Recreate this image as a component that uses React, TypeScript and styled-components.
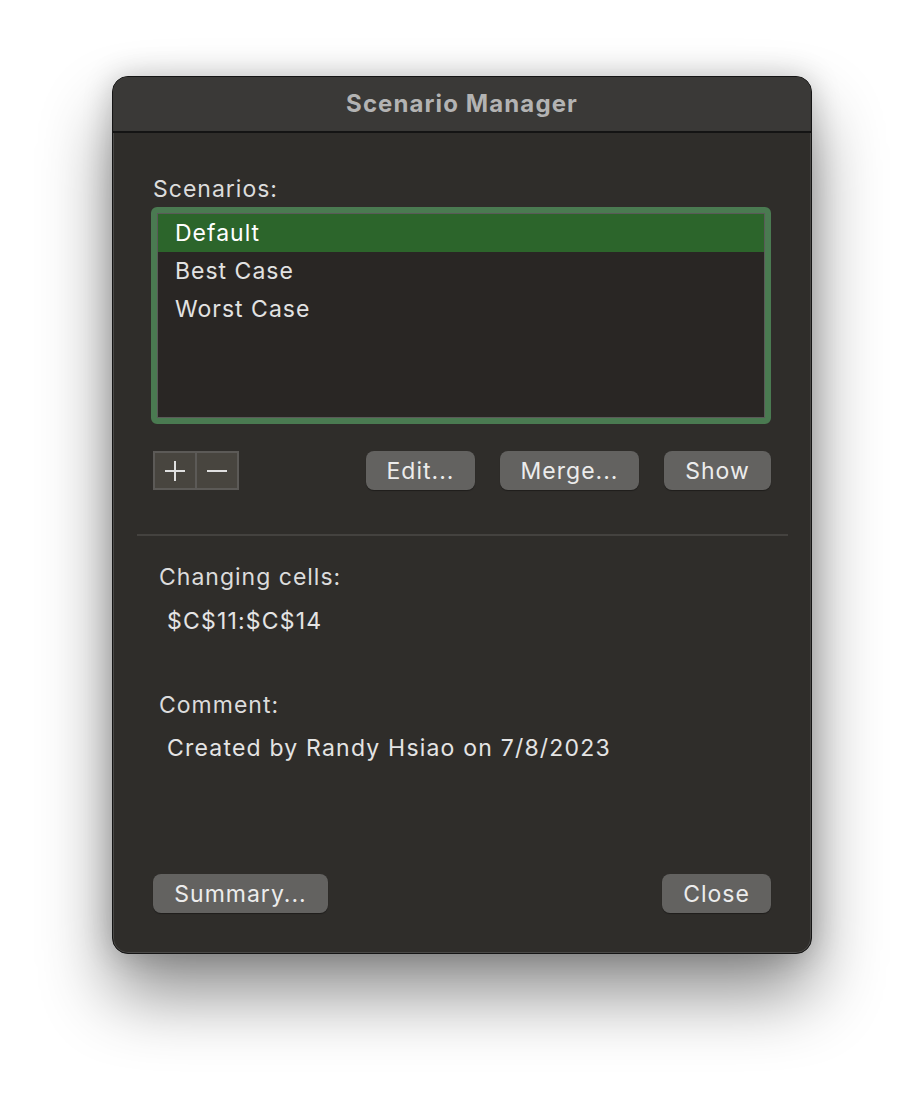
import * as React from 'react';
import styled, { createGlobalStyle } from 'styled-components';

const GlobalStyle = createGlobalStyle`
  html, body {
    margin: 0;
    padding: 0;
    background: #ffffff;
  }
  body {
    font-family: Inter, "Noto Sans", "Liberation Sans", sans-serif;
    -webkit-font-smoothing: antialiased;
  }
`;

const Page = styled.div`
  width: 924px;
  height: 1102px;
  box-sizing: border-box;
  padding-top: 76px;
  padding-left: 112px;
`;

const Window = styled.div`
  width: 700px;
  height: 878px;
  box-sizing: border-box;
  border-radius: 16px;
  background: #2f2d2a;
  border: 1px solid #151515;
  box-shadow: inset 0 0 0 1px #4a4947, 0 40px 70px rgba(0, 0, 0, 0.45), 0 0 30px rgba(0, 0, 0, 0.2);
  overflow: hidden;
  display: flex;
  flex-direction: column;
`;

const TitleBar = styled.div`
  height: 56px;
  flex: none;
  box-sizing: border-box;
  background: #3a3937;
  border-bottom: 2px solid #141414;
  padding-bottom: 2px;
  display: flex;
  align-items: center;
  justify-content: center;
  color: #b3b3b3;
  font-size: 24px;
  font-weight: 700;
  letter-spacing: 1.1px;
`;

const Body = styled.div`
  flex: 1;
  display: flex;
  flex-direction: column;
  padding: 0 23px 0 24px;
`;

const Label = styled.div<{ $indent?: number; $top?: number }>`
  color: #dcdcdc;
  font-size: 23px;
  letter-spacing: 1px;
  line-height: 28px;
  margin-top: ${p => p.$top ?? 0}px;
  padding-left: ${p => p.$indent ?? 0}px;
`;

const Value = styled(Label)`
  color: #e4e4e4;
  letter-spacing: 1.2px;
`;

const ListFrame = styled.div`
  margin-top: 4px;
  margin-left: 14px;
  width: 620px;
  height: 217px;
  box-sizing: border-box;
  border: 6px solid #4a7a51;
  border-radius: 6px;
  background: #4a7a51;
`;

const List = styled.div`
  height: 100%;
  box-sizing: border-box;
  background: #292624;
  border: 1px solid #5a5a58;
  display: flex;
  flex-direction: column;
`;

const Row = styled.div<{ $selected?: boolean }>`
  height: 38px;
  flex: none;
  display: flex;
  align-items: center;
  padding-left: 17px;
  font-size: 23px;
  letter-spacing: 1px;
  color: ${p => (p.$selected ? '#ffffff' : '#e2e2e2')};
  background: ${p => (p.$selected ? '#2c652b' : 'transparent')};
`;

const ButtonRow = styled.div<{ $top: number }>`
  display: flex;
  align-items: center;
  margin-top: ${p => p.$top}px;
  padding-left: 16px;
  padding-right: 17px;
`;

const Segment = styled.div`
  display: flex;
  height: 39px;
  box-sizing: border-box;
  border: 2px solid #5c5a57;
  background: #48453f;
  margin-right: auto;
`;

const SegmentButton = styled.div`
  width: 40px;
  display: flex;
  align-items: center;
  justify-content: center;
  & + & {
    border-left: 2px solid #5c5a57;
  }
`;

const Button = styled.div<{ $width: number; $gap?: number }>`
  width: ${p => p.$width}px;
  height: 39px;
  margin-left: ${p => p.$gap ?? 0}px;
  box-sizing: border-box;
  border-radius: 8px;
  background: #636260;
  box-shadow: 0 1px 1px rgba(0, 0, 0, 0.35);
  color: #ececec;
  font-size: 23px;
  letter-spacing: 1px;
  display: flex;
  align-items: center;
  justify-content: center;
`;

const Divider = styled.div`
  height: 2px;
  background: #44423f;
  margin-top: 44px;
`;

const Spacer = styled.div`
  flex: 1;
`;

const BottomGap = styled.div`
  height: 40px;
  flex: none;
`;

const PlusIcon = () => (
  <svg width="22" height="22" viewBox="0 0 22 22">
    <path d="M11 1v20M1 11h20" stroke="#e0e0e0" strokeWidth="2" />
  </svg>
);

const MinusIcon = () => (
  <svg width="22" height="22" viewBox="0 0 22 22">
    <path d="M1 11h20" stroke="#e0e0e0" strokeWidth="2" />
  </svg>
);

const scenarios = ['Default', 'Best Case', 'Worst Case'];

export default function App() {
  return (
    <>
      <GlobalStyle />
      <Page>
        <Window>
          <TitleBar>Scenario Manager</TitleBar>
          <Body>
            <Label $indent={16} $top={42}>Scenarios:</Label>
            <ListFrame>
              <List>
                {scenarios.map((s, i) => (
                  <Row key={s} $selected={i === 0}>
                    {s}
                  </Row>
                ))}
              </List>
            </ListFrame>
            <ButtonRow $top={27}>
              <Segment>
                <SegmentButton>
                  <PlusIcon />
                </SegmentButton>
                <SegmentButton>
                  <MinusIcon />
                </SegmentButton>
              </Segment>
              <Button $width={109}>Edit...</Button>
              <Button $width={139} $gap={25}>Merge...</Button>
              <Button $width={107} $gap={25}>Show</Button>
            </ButtonRow>
            <Divider />
            <Label $indent={22} $top={27}>Changing cells:</Label>
            <Value $indent={30} $top={16}>$C$11:$C$14</Value>
            <Label $indent={22} $top={56}>Comment:</Label>
            <Value $indent={30} $top={15}>Created by Randy Hsiao on 7/8/2023</Value>
            <Spacer />
            <ButtonRow $top={0}>
              <Button $width={175}>Summary...</Button>
              <Spacer />
              <Button $width={109}>Close</Button>
            </ButtonRow>
            <BottomGap />
          </Body>
        </Window>
      </Page>
    </>
  );
}
